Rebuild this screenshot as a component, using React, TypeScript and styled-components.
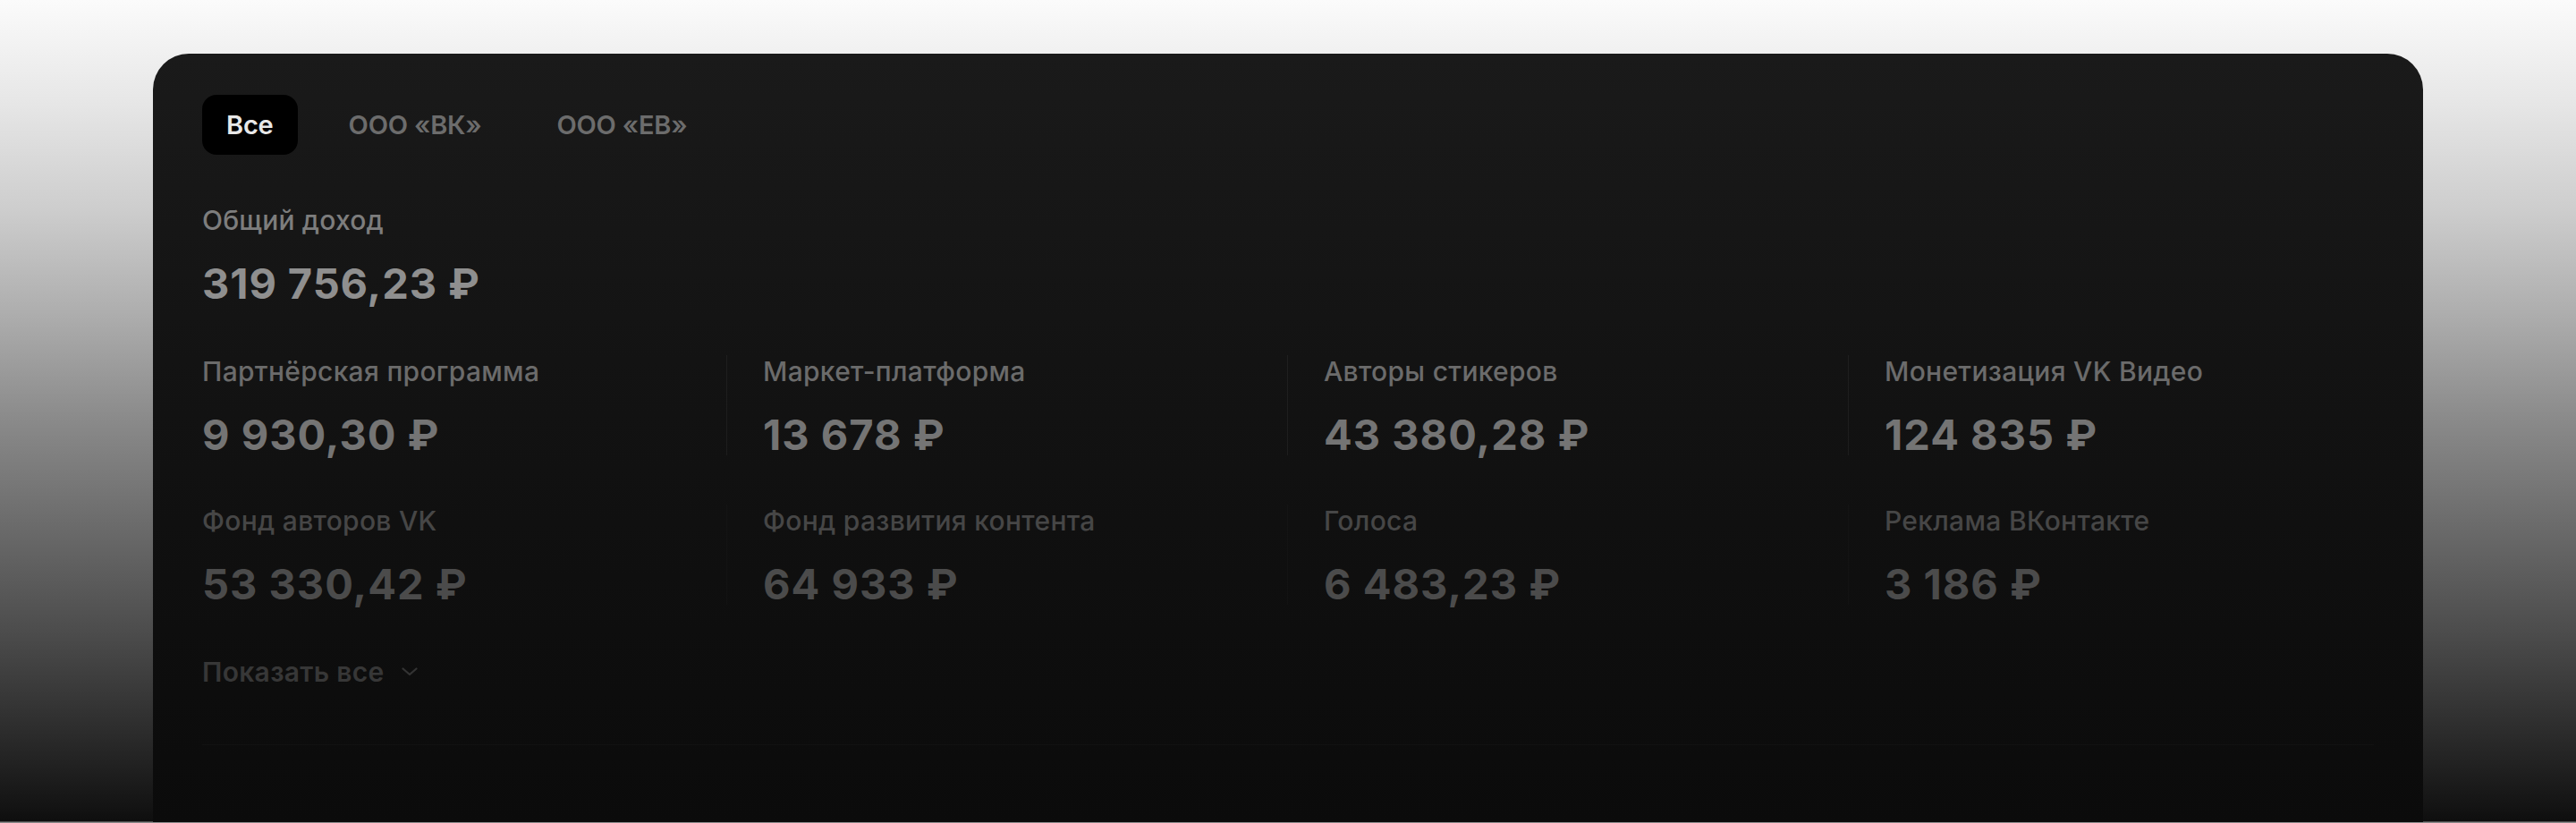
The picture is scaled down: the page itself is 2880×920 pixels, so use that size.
import React from "react";
import styled, { createGlobalStyle } from "styled-components";

const GlobalStyle = createGlobalStyle`
  html, body {
    margin: 0;
    padding: 0;
  }
  body {
    font-family: Inter, "Noto Sans", sans-serif;
    background: #0e0e0e;
  }
  * {
    box-sizing: border-box;
  }
`;

const Page = styled.div`
  height: 920px;
  padding-top: 60px;
  padding-bottom: 1px;
  display: flex;
  flex-direction: column;
  overflow: hidden;
  background: linear-gradient(
    180deg,
    #fbfbfb 0px,
    #e6e6e6 117px,
    #cdcdcd 235px,
    #adadad 352px,
    #8a8a8a 469px,
    #6b6b6b 587px,
    #4d4d4d 704px,
    #2b2b2b 822px,
    #131313 904px,
    #0e0e0e 918px,
    #8a8a8a 919px
  );
`;

const Card = styled.section`
  flex: 1;
  width: 2538px;
  margin: 0 auto;
  border-radius: 40px 40px 0 0;
  background: linear-gradient(180deg, #1a1a1a 0%, #131313 40%, #0e0e0e 75%, #0b0b0b 100%);
  padding: 46px 55px 0;
  display: flex;
  flex-direction: column;
`;

const Tabs = styled.div`
  display: flex;
  gap: 30px;
`;

const Tab = styled.button<{ $active?: boolean }>`
  height: 67px;
  padding: 0 27px;
  border: 0;
  border-radius: 16px;
  background: ${(p) => (p.$active ? "#000000" : "transparent")};
  color: ${(p) => (p.$active ? "#e8e8e8" : "#6c6c6c")};
  font-family: Inter, "Noto Sans", sans-serif;
  font-size: 29px;
  font-weight: 600;
  letter-spacing: -0.2px;
  line-height: 1;
  cursor: pointer;
`;

const Total = styled.div`
  margin-top: 55px;
  display: flex;
  flex-direction: column;
`;

const TotalLabel = styled.div`
  font-size: 30px;
  line-height: 36px;
  font-weight: 500;
  letter-spacing: 0.2px;
  color: #7d7d7d;
  margin-bottom: 30px;
`;

const TotalValue = styled.div`
  font-size: 47px;
  line-height: 46px;
  font-weight: 700;
  letter-spacing: 0.9px;
  color: #8f8f8f;
`;

const Grid = styled.div`
  margin: 57px -39px 0 -41px;
  display: grid;
  grid-template-columns: repeat(4, 1fr);
  row-gap: 55px;
`;

const Item = styled.div<{ $first: boolean; $fade: number }>`
  padding-left: 40px;
  border-left: 1px solid ${(p) => (p.$first ? "transparent" : `rgba(255,255,255,${0.05 * p.$fade})`)};
  display: flex;
  flex-direction: column;
  opacity: ${(p) => p.$fade};
`;

const ItemLabel = styled.div`
  font-size: 30px;
  line-height: 36px;
  font-weight: 500;
  letter-spacing: 0.3px;
  color: #6b6b6b;
  margin-bottom: 30px;
  white-space: nowrap;
`;

const ItemValue = styled.div`
  font-size: 47px;
  line-height: 46px;
  font-weight: 700;
  letter-spacing: 1px;
  color: #747474;
  white-space: nowrap;
`;

const ShowAll = styled.button`
  margin-top: 57px;
  align-self: flex-start;
  display: flex;
  align-items: center;
  gap: 19px;
  padding: 0;
  border: 0;
  background: transparent;
  font-family: Inter, "Noto Sans", sans-serif;
  font-size: 30px;
  line-height: 36px;
  font-weight: 600;
  letter-spacing: 0.3px;
  color: #373737;
  cursor: pointer;
`;

const Separator = styled.div`
  margin-top: 63px;
  height: 1px;
  background: rgba(255, 255, 255, 0.025);
`;

const Chevron = () => (
  <svg width="18" height="10" viewBox="0 0 18 10" fill="none">
    <path d="M1.5 1.5 L9 8 L16.5 1.5" stroke="#333333" strokeWidth="2.2" strokeLinecap="round" strokeLinejoin="round" />
  </svg>
);

const rows: { label: string; value: string }[][] = [
  [
    { label: "Партнёрская программа", value: "9 930,30 ₽" },
    { label: "Маркет-платформа", value: "13 678 ₽" },
    { label: "Авторы стикеров", value: "43 380,28 ₽" },
    { label: "Монетизация VK Видео", value: "124 835 ₽" },
  ],
  [
    { label: "Фонд авторов VK", value: "53 330,42 ₽" },
    { label: "Фонд развития контента", value: "64 933 ₽" },
    { label: "Голоса", value: "6 483,23 ₽" },
    { label: "Реклама ВКонтакте", value: "3 186 ₽" },
  ],
];

const fades = [1, 0.6];

export default function App() {
  return (
    <>
      <GlobalStyle />
      <Page>
        <Card>
          <Tabs>
            <Tab $active>Все</Tab>
            <Tab>ООО «ВК»</Tab>
            <Tab>ООО «ЕВ»</Tab>
          </Tabs>
          <Total>
            <TotalLabel>Общий доход</TotalLabel>
            <TotalValue>319 756,23 ₽</TotalValue>
          </Total>
          <Grid>
            {rows.map((row, r) =>
              row.map((it, c) => (
                <Item key={`${r}-${c}`} $first={c === 0} $fade={fades[r]}>
                  <ItemLabel>{it.label}</ItemLabel>
                  <ItemValue>{it.value}</ItemValue>
                </Item>
              ))
            )}
          </Grid>
          <ShowAll>
            Показать все
            <Chevron />
          </ShowAll>
          <Separator />
        </Card>
      </Page>
    </>
  );
}
